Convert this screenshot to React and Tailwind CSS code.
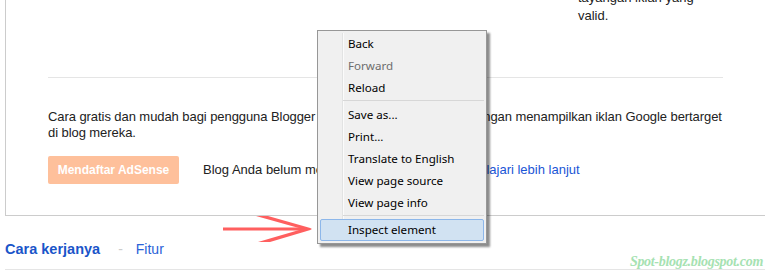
const menuItems = [
  { label: "Back" },
  { label: "Forward", disabled: true },
  { label: "Reload" },
  { sep: true },
  { label: "Save as..." },
  { label: "Print..." },
  { label: "Translate to English" },
  { label: "View page source" },
  { label: "View page info" },
  { sep: true },
  { label: "Inspect element", active: true },
];

function ContextMenu() {
  return (
    <div className="absolute left-[317px] top-[30px] w-[170px] border border-[#979797] bg-[#f0f0f0] py-[2px] font-['Noto_Sans',sans-serif] text-[11.6px] text-black shadow-[3px_3px_2px_rgba(0,0,0,0.45)]">
      {/* icon gutter divider */}
      <div className="absolute left-[24px] top-[2px] bottom-[2px] w-[2px] border-l border-[#e2e3e3] bg-white/70" />
      {menuItems.map((item, i) =>
        item.sep ? (
          <div key={i} className="relative h-[5px] pl-[25px] pr-[2px] pt-[1px]">
            <div className="h-px bg-[#d7d7d7]" />
          </div>
        ) : (
          <div
            key={i}
            className={
              item.active
                ? "relative mx-[2px] flex h-[22px] items-center rounded-[2px] border border-[#8db7ea] bg-[#d1e2f2] pl-[27px]"
                : "relative mx-[2px] flex h-[22px] items-center border border-transparent pl-[27px]" +
                  (item.disabled ? " text-[#6d6d6d]" : "")
            }
          >
            {item.label}
          </div>
        )
      )}
    </div>
  );
}

function Arrow() {
  return (
    <svg className="absolute left-[220px] top-[212px]" width="100" height="34" viewBox="0 0 100 34">
      <rect x="3" y="15.5" width="84" height="3" fill="#ff5f5f" />
      <polygon points="36,4 48,4 92,16.5 86,18" fill="#ff5f5f" />
      <polygon points="86,16 92,17.5 50,30 38,30" fill="#ff5f5f" />
    </svg>
  );
}

export default function App() {
  return (
    <div className="relative h-[278px] w-[765px] overflow-hidden bg-white font-['Liberation_Sans',Arial,sans-serif] text-[13px] text-[#222]">
      <div className="ml-[5px]">
        {/* AdSense panel */}
        <div className="flex flex-col border-b border-l border-[#cccccc] pb-[31px]">
          <div className="-mt-[11px] pl-[572px] leading-[18px]">
            <p>tayangan iklan yang</p>
            <p>valid.</p>
          </div>
          <div className="ml-[42px] mt-[52px] h-px w-[675px] bg-[#e5e5e5]" />
          <p className="ml-[42px] mt-[31px] w-[680px] leading-[16px] tracking-[-0.07px]">
            Cara gratis dan mudah bagi pengguna Blogger untuk menghasilkan uang dengan menampilkan iklan Google bertarget di blog mereka.
          </p>
          <div className="ml-[42px] mt-[15px] flex items-center gap-[24px]">
            <button className="h-[28px] w-[131px] rounded-[2px] bg-[#fec09b] text-[12px] font-bold text-white">
              Mendaftar AdSense
            </button>
            <p>
              Blog Anda belum memenuhi syarat AdSense.{" "}
              <a className="pl-[3px] text-[#1a55d6]">Pelajari lebih lanjut</a>
            </p>
          </div>
        </div>

        {/* Tabs */}
        <div className="flex items-center border-b border-[#e5e5e5] pb-[10px] pt-[23px] text-[14px] leading-[20px]">
          <span className="text-[14.5px] font-bold text-[#1a55c9]">Cara kerjanya</span>
          <span className="ml-[18px] text-[#cccccc]">-</span>
          <span className="ml-[13px] text-[#2a62d8]">Fitur</span>
        </div>
      </div>

      <Arrow />
      <ContextMenu />

      <div className="absolute right-[2px] top-[251px] font-['Liberation_Serif',serif] text-[14px] font-bold italic tracking-[-0.3px] text-[#a6e2b2]">
        Spot-blogz.blogspot.com
      </div>
    </div>
  );
}
